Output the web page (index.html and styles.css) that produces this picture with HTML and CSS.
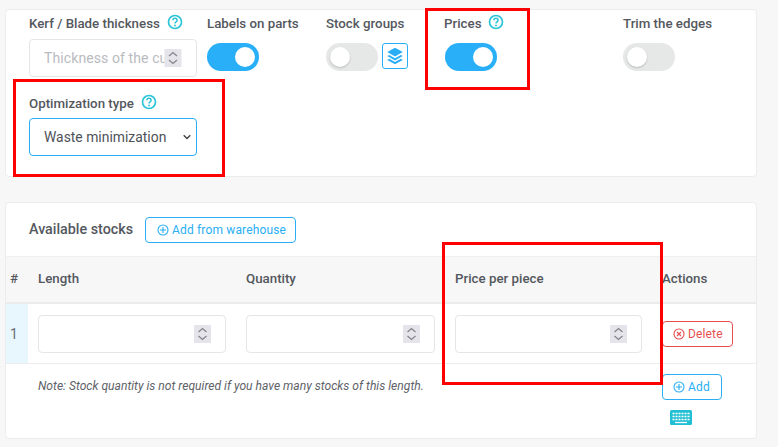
FILE: index.html
```html
<!DOCTYPE html>
<html lang="en">
<head>
<meta charset="utf-8">
<title>Stock settings</title>
<link rel="stylesheet" href="styles.css">
</head>
<body>
<svg class="defs" width="0" height="0" aria-hidden="true">
  <symbol id="help" viewBox="0 0 16 16">
    <circle cx="8" cy="8" r="6.5" fill="none" stroke="currentColor" stroke-width="1.700"/>
    <path d="M5.9 6.3c0-1.2.9-2 2.1-2s2.1.8 2.1 1.900c0 1.600-2.100 1.600-2.100 3.200" fill="none" stroke="currentColor" stroke-width="1.500"/>
    <circle cx="8" cy="11.500" r=".95" fill="currentColor"/>
  </symbol>
  <symbol id="spin" viewBox="0 0 17 18">
    <rect width="17" height="18" fill="#e4e4ea"/>
    <path d="M4.5 7 8.500 3.500 12.500 7M4.500 11 8.500 14.500 12.500 11" fill="none" stroke="#85858d" stroke-width="1.300"/>
  </symbol>
  <symbol id="plus" viewBox="0 0 12 12">
    <circle cx="6" cy="6" r="5" fill="none" stroke="currentColor" stroke-width="1.100"/>
    <path d="M6 3v6M3 6h6" stroke="currentColor" stroke-width="1.100"/>
  </symbol>
</svg>

<main class="page">
  <section class="card settings">
    <div class="field">
      <div class="label">Kerf / Blade thickness <svg class="help"><use href="#help"/></svg></div>
      <div class="input kerf"><span class="placeholder">Thickness of the cut</span><svg class="spin"><use href="#spin"/></svg></div>
    </div>
    <div class="field">
      <div class="label">Labels on parts</div>
      <div class="toggle on"></div>
    </div>
    <div class="field">
      <div class="label">Stock groups</div>
      <div class="toggle-row">
        <div class="toggle"></div>
        <span class="layers">
          <svg width="20" height="20" viewBox="0 0 18 18"><path d="M9 1.500 16 5.500 9 9.500 2 5.500Z" fill="#29aef5"/><path d="M3.800 8 2 9l7 4 7-4-1.800-1L9 11Z" fill="#29aef5"/><path d="M3.800 11.500 2 12.500l7 4 7-4-1.800-1L9 14.500Z" fill="#29aef5"/></svg>
        </span>
      </div>
    </div>
    <div class="field prices">
      <div class="label">Prices <svg class="help"><use href="#help"/></svg></div>
      <div class="toggle on"></div>
    </div>
    <div class="field">
      <div class="label">Trim the edges</div>
      <div class="toggle"></div>
    </div>
    <div class="field opt">
      <div class="label">Optimization type <svg class="help"><use href="#help"/></svg></div>
      <div class="input select">
        <span>Waste minimization</span>
        <svg width="8" height="6" viewBox="0 0 8 6"><path d="M.7 1.300 4 4.600l3.300-3.300" fill="none" stroke="#444" stroke-width="1.400"/></svg>
      </div>
    </div>
  </section>

  <section class="card stocks">
    <header class="stocks-head">
      <h2>Available stocks</h2>
      <span class="btn blue wide"><svg class="ico"><use href="#plus"/></svg>Add from warehouse</span>
    </header>
    <div class="table">
      <div class="row head">
        <div class="idx">#</div>
        <div class="cell">Length</div>
        <div class="cell">Quantity</div>
        <div class="cell">Price per piece</div>
        <div class="cell">Actions</div>
      </div>
      <div class="row body">
        <div class="idx num">1</div>
        <div class="cell"><div class="input"><svg class="spin"><use href="#spin"/></svg></div></div>
        <div class="cell"><div class="input"><svg class="spin"><use href="#spin"/></svg></div></div>
        <div class="cell"><div class="input"><svg class="spin"><use href="#spin"/></svg></div></div>
        <div class="cell"><span class="btn red"><svg class="ico" viewBox="0 0 12 12"><circle cx="6" cy="6" r="5" fill="none" stroke="currentColor" stroke-width="1.100"/><path d="M4 4l4 4M8 4l-4 4" stroke="currentColor" stroke-width="1.100"/></svg>Delete</span></div>
      </div>
      <div class="row foot">
        <p class="note">Note: Stock quantity is not required if you have many stocks of this length.</p>
        <div class="cell add">
          <span class="btn blue"><svg class="ico"><use href="#plus"/></svg>Add</span>
          <svg class="kbd" width="22" height="15" viewBox="0 0 22 15">
            <rect width="22" height="15" rx="1.500" fill="#22bfd4"/>
            <path d="M2.500 3.500h17M2.500 6.500h17M2.500 9.500h17" stroke="#fff" stroke-width="1.300" stroke-dasharray="2 1"/>
            <path d="M5 12.500h12" stroke="#fff" stroke-width="1.300"/>
          </svg>
        </div>
      </div>
    </div>
  </section>
</main>

<div class="mark m1"></div>
<div class="mark m2"></div>
<div class="mark m3"></div>
</body>
</html>
```

FILE: styles.css
```css
* { box-sizing: border-box; }
html, body { height: 100%; }
body {
  margin: 0;
  background: #f7f7f7;
  font-family: Roboto, "Liberation Sans", sans-serif;
  color: #54585e;
  position: relative;
  overflow: hidden;
}
.defs { position: absolute; }
.page { padding: 9px 21px 0 5px; }
.card {
  background: #fff;
  border: 1px solid #ececec;
  border-radius: 4px;
}
.settings {
  height: 168px;
  padding: 4px 0 0 23px;
  display: grid;
  grid-template-columns: 178px 119px 118px 179px 1fr;
  grid-template-rows: 64px auto;
  row-gap: 16px;
}
.label {
  font-size: 13.300px;
  font-weight: 500;
  height: 19px;
  line-height: 19px;
  display: flex;
  align-items: center;
  gap: 7px;
  white-space: nowrap;
}
.help { width: 16px; height: 16px; color: #2bc4d8; margin-top: -3px; }
.field { min-width: 0; }
.field .toggle, .toggle-row { margin-top: 10px; }
.toggle-row { display: flex; gap: 4px; }
.toggle-row .toggle { margin-top: 0; }
.prices .toggle { margin-left: 1px; }
.toggle {
  width: 52px;
  height: 28px;
  border-radius: 14px;
  background: #e6e7e7;
  position: relative;
}
.toggle::after {
  content: "";
  position: absolute;
  top: 4px;
  left: 4px;
  width: 20px;
  height: 20px;
  border-radius: 50%;
  background: #fff;
  box-shadow: 0 1px 2px rgba(0,0,0,.2);
}
.toggle.on { background: #29aef8; }
.toggle.on::after { left: 28px; box-shadow: none; }
.layers {
  width: 26px;
  height: 26px;
  border: 1px solid #29aef5;
  border-radius: 3px;
  display: flex;
  align-items: center;
  justify-content: center;
}
.input {
  height: 38px;
  border: 1px solid #e6e6e6;
  border-radius: 4px;
  display: flex;
  align-items: center;
  justify-content: flex-end;
  padding-right: 14px;
  background: #fff;
  overflow: hidden;
}
.kerf {
  width: 168px;
  margin-top: 6px;
  padding: 0 14px;
  justify-content: flex-start;
  position: relative;
}
.placeholder {
  font-size: 14px;
  color: #b9bbc0;
  white-space: nowrap;
  letter-spacing: .1px;
}
.kerf .spin {
  position: absolute;
  right: 14px;
  top: 9px;
  width: 18px;
}
.spin { width: 17px; height: 18px; flex: none; }
.opt { grid-column: 1 / 2; }
.select {
  width: 168px;
  margin-top: 5px;
  border-color: #29aef5;
  padding: 0 5px 0 14px;
  justify-content: space-between;
  font-size: 13.900px;
  color: #4e5258;
}
.stocks {
  height: 237px;
  margin-top: 25px;
}
.stocks-head {
  height: 53px;
  padding-left: 23px;
  display: flex;
  align-items: center;
  gap: 12px;
}
.stocks-head h2 {
  margin: -2px 0 0;
  font-size: 14.300px;
  font-weight: 500;
}
.row {
  display: grid;
  grid-template-columns: 22px 208px 209px 207px 1fr;
}
.head {
  height: 48px;
  background: #f7f7f7;
  border-top: 1px solid #f0f0f0;
  border-bottom: 2px solid #ececec;
  font-size: 13.300px;
  font-weight: 500;
  align-items: center;
}
.idx { padding-left: 4px; }
.head .idx, .head .cell { margin-top: -2px; }
.cell { padding: 0 10px; white-space: nowrap; }
.body {
  height: 60px;
  border-bottom: 1px solid #ececec;
}
.num {
  background: #e8f7fd;
  display: flex;
  align-items: center;
  font-size: 14px;
  color: #6a6f76;
}
.body .cell { display: flex; align-items: center; justify-content: flex-start; }
.body .input { width: 100%; }
.btn {
  height: 26px;
  border: 1px solid;
  border-radius: 4px;
  display: inline-flex;
  align-items: center;
  gap: 3px;
  padding: 0 0 0 10px;
  font-size: 12px;
  letter-spacing: .15px;
  background: #fff;
}
.ico { width: 12px; height: 12px; flex: none; }
.blue { color: #29aef5; border-color: #29aef5; }
.red { color: #e5504f; border-color: #e5504f; width: 71px; }
.wide { padding: 0 0 0 11px; width: 151px; white-space: nowrap; }
.foot { grid-template-columns: 646px 1fr; position: relative; }
.note {
  margin: 15px 0 0 32px;
  font-size: 12.100px;
  font-style: italic;
  color: #5e6268;
  white-space: nowrap;
}
.add { padding-top: 10px; display: flex; flex-direction: column; align-items: flex-start; }
.add .btn { width: 60px; }
.kbd { margin: 10px 0 0 8px; }
.mark {
  position: absolute;
  border: 3px solid #f00;
  pointer-events: none;
}
.m1 { left: 13px; top: 79px; width: 212px; height: 98px; }
.m2 { left: 425px; top: 8px; width: 105px; height: 82px; }
.m3 { left: 442px; top: 242px; width: 221px; height: 143px; }
```
